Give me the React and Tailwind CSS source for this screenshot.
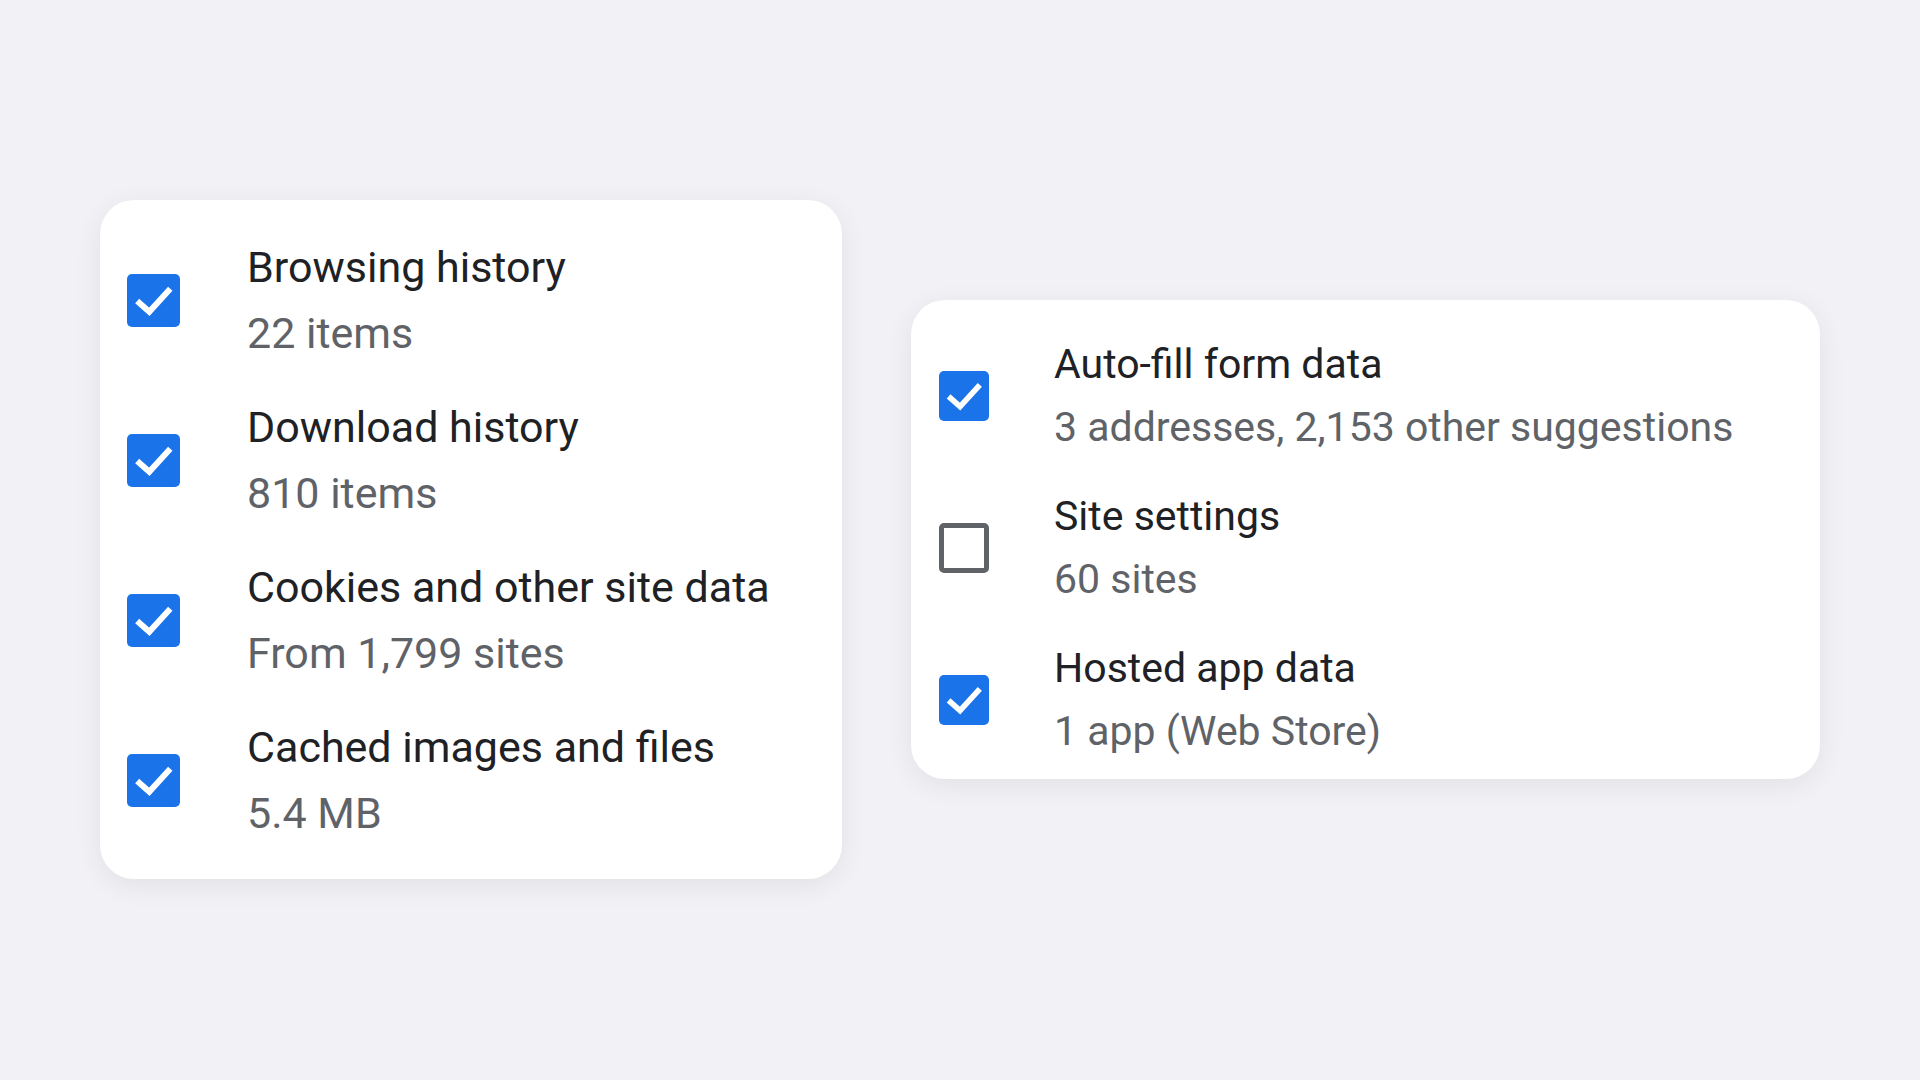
import React from "react";

function Check({ checked, size }) {
  if (!checked) {
    return (
      <div
        className={`${size} shrink-0 rounded-[5px] border-[5px] border-[#5f6368] bg-white`}
      />
    );
  }
  return (
    <div className={`${size} shrink-0 rounded-[5px] bg-[#1a73e8] flex items-center justify-center`}>
      <svg viewBox="0 0 24 24" className="w-full h-full">
        <polyline
          points="4.6,12.2 10.1,17.1 19.6,6.7"
          fill="none"
          stroke="white"
          strokeWidth="2.7"
        />
      </svg>
    </div>
  );
}

function Row({ title, sub, checked, big }) {
  return (
    <div className="flex items-center">
      <div className={big ? "pl-[27px] w-[147px]" : "pl-[28px] w-[143px]"}>
        <Check checked={checked} size={big ? "w-[53px] h-[53px]" : "w-[50px] h-[50px]"} />
      </div>
      <div className="flex flex-col">
        <div
          className={
            big
              ? "text-[43px] leading-[66px] text-[#202124]"
              : "text-[41px] leading-[63px] text-[#202124]"
          }
        >
          {title}
        </div>
        <div
          className={
            big
              ? "text-[43px] leading-[66px] text-[#5f6368]"
              : "text-[41px] leading-[63px] text-[#5f6368]"
          }
        >
          {sub}
        </div>
      </div>
    </div>
  );
}

export default function App() {
  const left = [
    ["Browsing history", "22 items", true],
    ["Download history", "810 items", true],
    ["Cookies and other site data", "From 1,799 sites", true],
    ["Cached images and files", "5.4 MB", true],
  ];
  const right = [
    ["Auto-fill form data", "3 addresses, 2,153 other suggestions", true],
    ["Site settings", "60 sites", false],
    ["Hosted app data", "1 app (Web Store)", true],
  ];
  return (
    <div
      className="w-[1920px] h-[1080px] bg-[#f2f2f6] flex items-start pl-[100px] pt-[200px] gap-[69px]"
      style={{ fontFamily: "Roboto, 'Noto Sans', sans-serif" }}
    >
      <div className="w-[742px] h-[679px] bg-white rounded-[34px] shadow-[0_6px_28px_rgba(0,0,0,0.07)] pt-[34px] flex flex-col gap-[28px]">
        {left.map(([t, s, c]) => (
          <Row key={t} title={t} sub={s} checked={c} big />
        ))}
      </div>
      <div className="mt-[100px] w-[909px] h-[479px] bg-white rounded-[34px] shadow-[0_6px_28px_rgba(0,0,0,0.07)] pt-[33px] flex flex-col gap-[26px]">
        {right.map(([t, s, c]) => (
          <Row key={t} title={t} sub={s} checked={c} />
        ))}
      </div>
    </div>
  );
}
